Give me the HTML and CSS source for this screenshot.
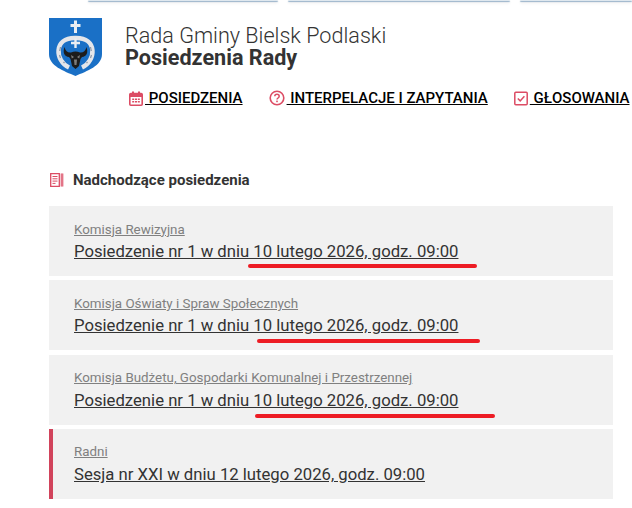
FILE: index.html
```html
<!DOCTYPE html>
<html lang="pl">
<head>
    <meta charset="UTF-8">
    <title>Posiedzenia Rady</title>
    <link rel="stylesheet" href="styles.css">
</head>
<body>
    <div class="top-tabs">
        <div class="top-tab tab-one"></div>
        <div class="top-tab tab-two"></div>
        <div class="top-tab tab-three"></div>
    </div>

    <header class="site-header">
        <svg class="crest" viewBox="0 0 53 58">
            <path d="M0 0H53V36C53 48 38 53 26.500 58C15 53 0 48 0 36Z" fill="#1a70c6"/>
            <path d="M25 2.500H28V6H31.500V9H28V15H25V9H21.500V6H25Z" fill="#e9edf2"/>
            <path d="M20 49.500C6 43 4 19.500 26.500 20C49 19.500 47 43 33 49.500" fill="none" stroke="#e4e6ea" stroke-width="4.500"/>
            <path d="M11.500 29L10.700 33M10.500 37L11.500 40M14.500 44L15.500 45M41.500 29L42.300 33M42.500 37L41.500 40M38.500 44L37.500 45" stroke="#8b97a6" stroke-width="1.200"/>
            <path d="M25.300 20.500H27.700V23.800H31V26.200H27.700V30H25.300V26.200H22V23.800H25.300Z" fill="#e9edf2"/>
            <path d="M15.500 29C13.500 35 15.500 38.500 20 39L21.500 41L23 48L26.500 51L30 48L31.500 41L33 39C37.500 38.500 39.500 35 37.500 29C36.500 33 34 35 31 34.500C28 33 25 33 22 34.500C19 35 16.500 33 15.500 29Z" fill="#1c1c1c"/>
            <path d="M22 37L25 39L22.800 40.500ZM31 37L28 39L30.200 40.500ZM25 41.500H28L27.500 47H25.500Z" fill="#7c7c7c"/>
        </svg>
        <div class="titles">
            <div class="site-name">Rada Gminy Bielsk Podlaski</div>
            <div class="page-name">Posiedzenia Rady</div>
        </div>
    </header>

    <nav class="main-nav">
        <a class="nav-item" href="#">
            <svg class="icon" viewBox="0 0 14 15">
                <rect x="0.800" y="2.500" width="12.400" height="11.700" rx="1" fill="none" stroke="#dc4c64" stroke-width="1.600"/>
                <path d="M1 3H13V6H1ZM3 0.500H5V3H3ZM9 0.500H11V3H9ZM3.200 7.500H5.200V9H3.200ZM6 7.500H8V9H6ZM8.800 7.500H10.800V9H8.800ZM3.200 10H5.200V11.500H3.200ZM6 10H8V11.500H6ZM8.800 10H10.800V11.500H8.800Z" fill="#dc4c64"/>
            </svg>
            <span class="nav-text">&nbsp;POSIEDZENIA</span>
        </a>
        <a class="nav-item" href="#">
            <svg class="icon icon-wide" viewBox="0 0 16 16">
                <circle cx="8" cy="8" r="6.800" fill="none" stroke="#dc4c64" stroke-width="1.600"/>
                <path d="M5.800 6.300C5.800 3.700 10.200 3.700 10.200 6.300C10.200 8 8 8 8 9.600" fill="none" stroke="#dc4c64" stroke-width="1.500"/>
                <rect x="7.200" y="10.600" width="1.600" height="1.600" fill="#dc4c64"/>
            </svg>
            <span class="nav-text">&nbsp;INTERPELACJE I ZAPYTANIA</span>
        </a>
        <a class="nav-item" href="#">
            <svg class="icon" viewBox="0 0 14 14">
                <rect x="0.800" y="0.800" width="12.400" height="12.400" rx="1" fill="none" stroke="#dc4c64" stroke-width="1.500"/>
                <path d="M3.800 7L6.200 9.400L10.400 4.800" fill="none" stroke="#dc4c64" stroke-width="1.500"/>
            </svg>
            <span class="nav-text">&nbsp;GŁOSOWANIA</span>
        </a>
    </nav>

    <main class="content">
        <h2 class="section-title">
            <svg class="section-icon" viewBox="0 0 14 14">
                <path d="M0.700 0.700H9.300V13.300H0.700Z" fill="none" stroke="#dc4c64" stroke-width="1.300"/>
                <path d="M2.500 3.500H7.500M2.500 5.800H7.500M2.500 8.100H7.500M2.500 10.400H5.500" stroke="#dc4c64" stroke-width="1"/>
                <path d="M10.500 0.500H13.500V13.500H10.500Z" fill="#e8909f"/>
                <path d="M12 0.500V13.500" stroke="#dc4c64" stroke-width="0.800"/>
            </svg>
            Nadchodzące posiedzenia
        </h2>

        <div class="meeting">
            <a class="meeting-org" href="#">Komisja Rewizyjna</a>
            <a class="meeting-link" href="#">Posiedzenie nr 1 w dniu 10 lutego 2026, godz. 09:00</a>
            <span class="scribble scribble-one"></span>
        </div>
        <div class="meeting">
            <a class="meeting-org" href="#">Komisja Oświaty i Spraw Społecznych</a>
            <a class="meeting-link" href="#">Posiedzenie nr 1 w dniu 10 lutego 2026, godz. 09:00</a>
            <span class="scribble scribble-two"></span>
        </div>
        <div class="meeting">
            <a class="meeting-org" href="#">Komisja Budżetu, Gospodarki Komunalnej i Przestrzennej</a>
            <a class="meeting-link" href="#">Posiedzenie nr 1 w dniu 10 lutego 2026, godz. 09:00</a>
            <span class="scribble scribble-three"></span>
        </div>
        <div class="meeting session">
            <a class="meeting-org" href="#">Radni</a>
            <a class="meeting-link" href="#">Sesja nr XXI w dniu 12 lutego 2026, godz. 09:00</a>
        </div>
    </main>
</body>
</html>
```

FILE: styles.css
```css
body {
    font-family: Roboto, "Liberation Sans", sans-serif;
    margin: 0;
    background-color: #fff;
    color: #333;
    overflow: hidden;
}
.top-tabs {
    display: flex;
    height: 2px;
    padding-left: 88px;
    gap: 10px;
}
.top-tab {
    height: 1px;
    background: #dfe8ef;
    border-radius: 0 0 3px 3px;
    box-shadow: 0 1px 1px rgba(100, 140, 175, 0.7), 0 2px 3px rgba(0, 0, 0, 0.12);
}
.tab-one {
    width: 190px;
}
.tab-two {
    width: 222px;
}
.tab-three {
    flex: 1;
}
.site-header {
    display: flex;
    align-items: flex-start;
    gap: 23px;
    padding: 16px 0 0 49px;
}
.crest {
    width: 53px;
    height: 58px;
    flex: none;
}
.titles {
    padding-top: 7px;
}
.site-name {
    font-size: 21.600px;
    font-weight: 300;
    line-height: 22px;
}
.page-name {
    font-size: 21.600px;
    font-weight: 700;
    line-height: 22px;
}
.main-nav {
    display: flex;
    gap: 26px;
    padding: 8px 0 0 129px;
    white-space: nowrap;
}
.nav-item {
    display: flex;
    align-items: center;
    gap: 2px;
    color: #000;
    font-size: 15px;
    font-weight: 500;
    line-height: 28px;
    text-decoration: none;
}
.nav-text {
    text-decoration: underline;
}
.icon {
    width: 14px;
    height: 15px;
}
.icon-wide {
    width: 16px;
    height: 16px;
}
.content {
    padding: 58px 19px 0 49px;
}
.section-title {
    font-size: 15px;
    font-weight: 700;
    line-height: 20px;
    margin: 0 0 16px;
    display: flex;
    align-items: center;
    gap: 9px;
    padding-left: 1px;
}
.section-icon {
    width: 14px;
    height: 14px;
}
.meeting {
    position: relative;
    background: #f1f1f1;
    height: 70px;
    margin-bottom: 4.400px;
    padding-left: 25px;
    box-sizing: border-box;
    padding-top: 14.600px;
}
.meeting.session {
    border-left: 4px solid #d1435b;
    padding-left: 21px;
    padding-top: 14px;
}
.meeting-org {
    display: block;
    width: fit-content;
    color: #808080;
    font-size: 13.350px;
    line-height: 17px;
}
.meeting-link {
    display: block;
    width: fit-content;
    color: #333;
    font-size: 16.700px;
    line-height: 27px;
    margin-top: 0.400px;
}
.session .meeting-link {
    margin-top: 1px;
}
.scribble {
    position: absolute;
    height: 4px;
    background: #ed1c24;
    border-radius: 2px;
}
.scribble-one {
    left: 199px;
    width: 229px;
    top: 58px;
}
.scribble-two {
    left: 208px;
    width: 223px;
    top: 59px;
}
.scribble-three {
    left: 206px;
    width: 240px;
    top: 59px;
}
```
